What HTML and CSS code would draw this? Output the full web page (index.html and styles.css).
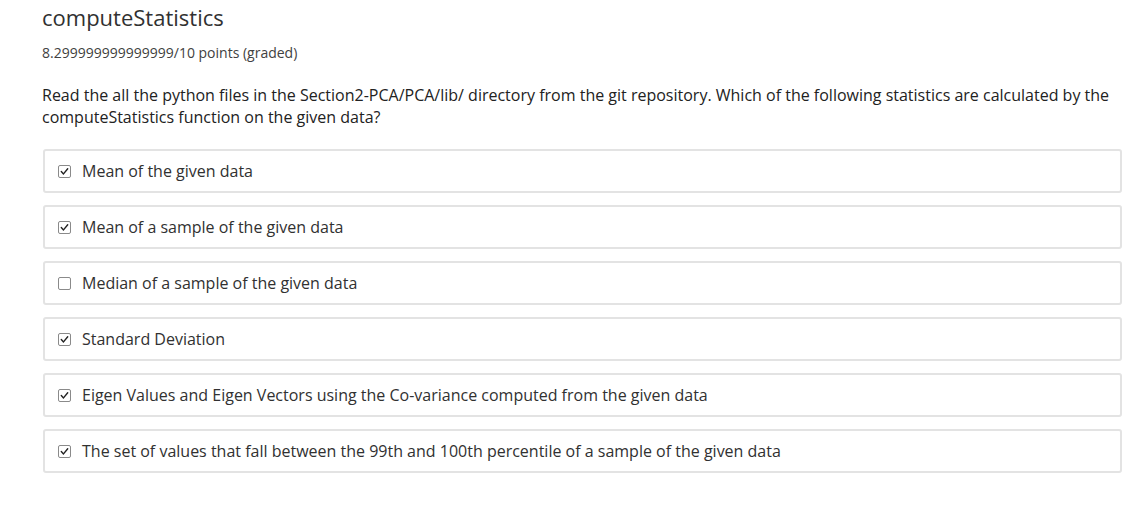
FILE: index.html
```html
<!DOCTYPE html>
<html>
<head>
<meta charset="utf-8">
<link rel="stylesheet" href="styles.css">
</head>
<body>
<div class="problem">
  <h2 class="title">computeStatistics</h2>
  <div class="score">8.299999999999999/10 points (graded)</div>
  <p class="question">Read the all the python files in the Section2-PCA/PCA/lib/ directory from the git repository. Which of the following statistics are calculated by the computeStatistics function on the given data?</p>
  <div class="choices">
    <label class="choice"><span class="box"><svg class="tick" viewBox="0 0 11 11"><polyline points="2.3,5.6 4.5,7.9 8.7,2.8"/></svg></span><span class="text">Mean of the given data</span></label>
    <label class="choice"><span class="box"><svg class="tick" viewBox="0 0 11 11"><polyline points="2.3,5.6 4.5,7.9 8.7,2.8"/></svg></span><span class="text">Mean of a sample of the given data</span></label>
    <label class="choice"><span class="box"></span><span class="text">Median of a sample of the given data</span></label>
    <label class="choice"><span class="box"><svg class="tick" viewBox="0 0 11 11"><polyline points="2.3,5.6 4.5,7.9 8.7,2.8"/></svg></span><span class="text">Standard Deviation</span></label>
    <label class="choice"><span class="box"><svg class="tick" viewBox="0 0 11 11"><polyline points="2.3,5.6 4.5,7.9 8.7,2.8"/></svg></span><span class="text">Eigen Values and Eigen Vectors using the Co-variance computed from the given data</span></label>
    <label class="choice"><span class="box"><svg class="tick" viewBox="0 0 11 11"><polyline points="2.3,5.6 4.5,7.9 8.7,2.8"/></svg></span><span class="text">The set of values that fall between the 99th and 100th percentile of a sample of the given data</span></label>
  </div>
</div>
</body>
</html>
```
FILE: styles.css
```css
html, body {
  margin: 0;
  padding: 0;
  background: #fff;
}
body {
  font-family: "Open Sans", "DejaVu Sans", sans-serif;
  color: #313131;
}
.problem {
  padding: 2px 24px 0 42px;
}
.title {
  margin: 0;
  font-size: 22px;
  font-weight: 400;
  line-height: 30px;
  color: #313131;
}
.score {
  margin-top: 11px;
  font-size: 14px;
  line-height: 20px;
  color: #414141;
}
.question {
  margin: 21px 0 0 0;
  font-size: 16px;
  line-height: 22px;
  color: #222;
}
.choices {
  margin-top: 21px;
  display: flex;
  flex-direction: column;
  gap: 12px;
  padding-left: 1px;
}
.choice {
  display: flex;
  align-items: center;
  height: 40px;
  border: 2px solid #e3e3e3;
  border-radius: 3px;
  padding-left: 13px;
}
.box {
  width: 11px;
  height: 11px;
  border: 1px solid #8a8a8a;
  border-radius: 2px;
  flex: none;
  background: #fff;
  display: flex;
}
.tick {
  width: 11px;
  height: 11px;
}
.tick polyline {
  fill: none;
  stroke: #222;
  stroke-width: 1.4;
  stroke-linecap: round;
  stroke-linejoin: round;
}
.text {
  margin-left: 11px;
  font-size: 16px;
  color: #313131;
}
```
